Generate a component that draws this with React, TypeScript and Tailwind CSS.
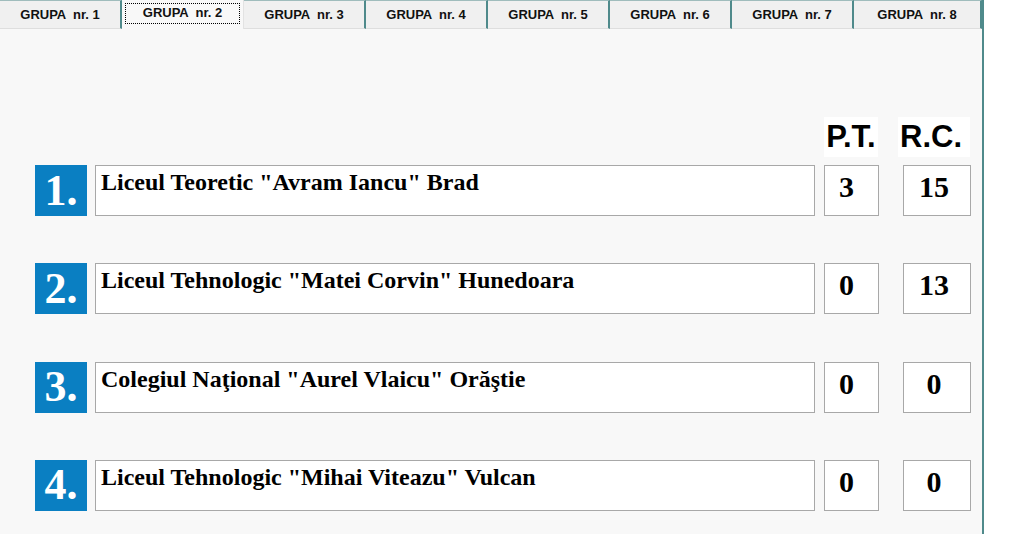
import React from 'react';

const tabs = [1, 2, 3, 4, 5, 6, 7, 8];

const teams = [
  { pos: 1, name: 'Liceul Teoretic "Avram Iancu" Brad', pt: '3', rc: '15' },
  { pos: 2, name: 'Liceul Tehnologic "Matei Corvin" Hunedoara', pt: '0', rc: '13' },
  { pos: 3, name: 'Colegiul Naţional "Aurel Vlaicu" Orăştie', pt: '0', rc: '0' },
  { pos: 4, name: 'Liceul Tehnologic "Mihai Viteazu" Vulcan', pt: '0', rc: '0' },
];

export default function App() {
  const active = 2;

  return (
    <div className="w-[1011px] h-[534px] bg-white overflow-hidden">
      <div className="w-[984px] h-full bg-[#f8f8f8] border-r-2 border-[#4f8a8b] flex flex-col">
        {/* Tabs */}
        <div className="flex h-[29px] shrink-0">
          {tabs.map((t) => {
            const selected = t === active;
            const last = t === tabs.length;
            return (
              <div
                key={t}
                className={
                  selected
                    ? 'w-[122px] h-full bg-[#f8f8f8] border-r border-[#e2e2e2] flex justify-center pt-[3px]'
                    : `${last ? 'w-[128px]' : 'w-[122px]'} h-full bg-[#f0f0f0] border-t border-[#9fbcbc] border-r-2 border-r-[#4f8a8b] border-b border-b-[#dedede] flex justify-center pt-[6px]`
                }
              >
                {selected ? (
                  <div className="w-[115px] h-[21px] border border-dotted border-black flex justify-center pt-[1px]">
                    <span className="text-[13px] font-bold leading-[16px] text-[#111] whitespace-pre font-['Liberation_Sans',Arial,sans-serif]">
                      {`GRUPA  nr. ${t}`}
                    </span>
                  </div>
                ) : (
                  <span className="text-[13px] font-bold leading-[16px] text-[#111] whitespace-pre font-['Liberation_Sans',Arial,sans-serif]">
                    {`GRUPA  nr. ${t}`}
                  </span>
                )}
              </div>
            );
          })}
        </div>

        {/* Table */}
        <div className="pl-[35px] pt-[88px]">
          {/* Header */}
          <div className="flex h-[40px]">
            <div className="w-[789px]" />
            <div className="w-[54px] h-full bg-white flex justify-center pt-[4px]">
              <span className="text-[31px] font-bold leading-none text-black font-['Liberation_Sans',Arial,sans-serif]">P.T.</span>
            </div>
            <div className="w-[72px] ml-[20px] h-full bg-white flex justify-center pr-[6px] pt-[4px]">
              <span className="text-[31px] font-bold leading-none text-black font-['Liberation_Sans',Arial,sans-serif]">R.C.</span>
            </div>
          </div>

          {/* Rows */}
          <div className="flex flex-col gap-[47.33px] mt-[8px]">
            {teams.map((team) => (
              <div key={team.pos} className="flex h-[51px]">
                <div className="w-[52px] h-full bg-[#0a7fc2] flex items-center justify-center">
                  <span className="text-[44px] font-bold leading-none text-white font-['Liberation_Serif','Times_New_Roman',serif]">
                    {team.pos}.
                  </span>
                </div>
                <div className="w-[720px] ml-[8px] h-full bg-white border border-[#a8a8a8] pl-[5px] pt-[4px]">
                  <span className="text-[24px] font-bold leading-none text-black font-['Liberation_Serif','Times_New_Roman',serif]">
                    {team.name}
                  </span>
                </div>
                <div className="w-[55px] ml-[9px] h-full bg-white border border-[#a8a8a8] flex justify-center pr-[10px] pt-[6px]">
                  <span className="text-[30px] font-bold leading-none text-black font-['Liberation_Serif','Times_New_Roman',serif]">
                    {team.pt}
                  </span>
                </div>
                <div className="w-[68px] ml-[24px] h-full bg-white border border-[#a8a8a8] flex justify-center pr-[6px] pt-[6px]">
                  <span className="text-[30px] font-bold leading-none text-black font-['Liberation_Serif','Times_New_Roman',serif]">
                    {team.rc}
                  </span>
                </div>
              </div>
            ))}
          </div>
        </div>
      </div>
    </div>
  );
}
